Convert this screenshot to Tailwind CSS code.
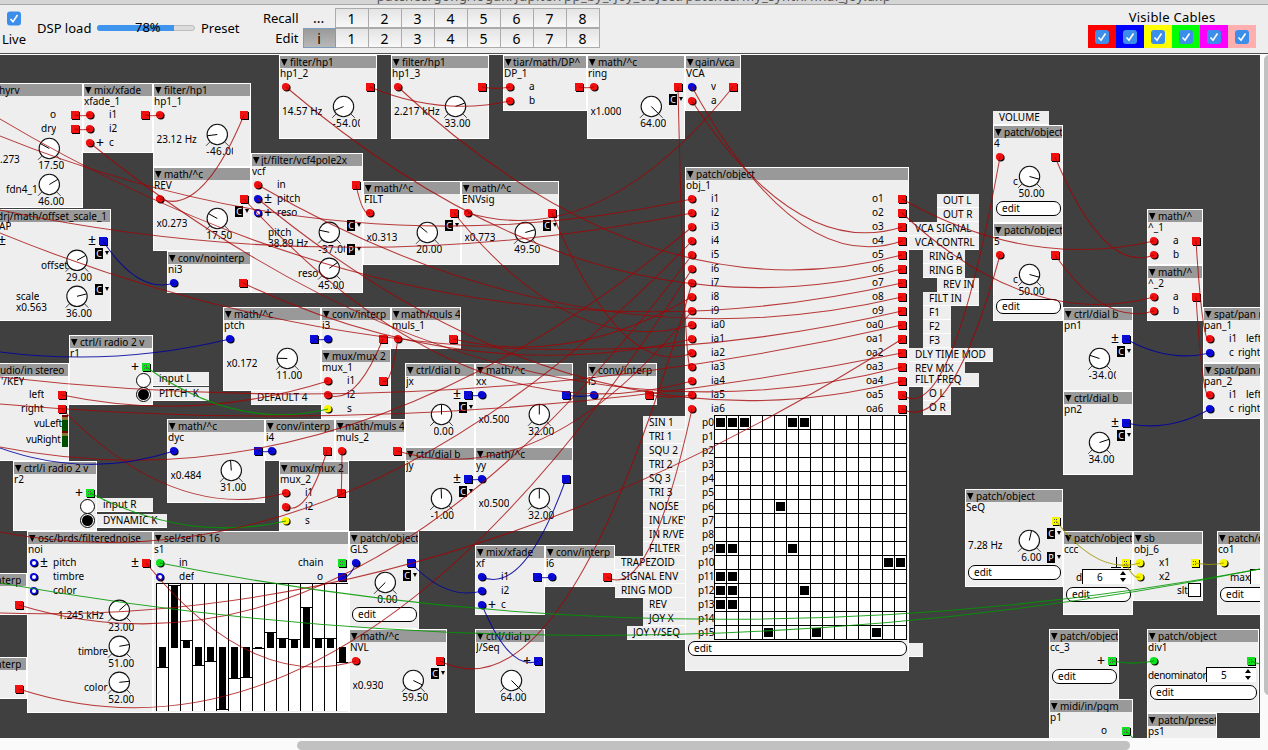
<!DOCTYPE html>
<html lang="en">
<head>
<meta charset="utf-8">
<title>Patch editor</title>
<script src="https://cdn.jsdelivr.net/npm/@tailwindcss/browser@4"></script>
</head>
<body class="w-[1268px] h-[750px] overflow-hidden bg-[#fafafa] text-black font-['Noto_Sans',sans-serif] flex flex-col">
<div class="h-[5px] shrink-0 bg-[#d5d5d5] border-b border-[#a8a8a8] overflow-hidden flex justify-center">
  <span class="text-[13px] leading-[14px] -mt-[11px] text-[#555] tracking-[0.5px] whitespace-pre">patches/gong/logan/jupiter/pp_by_/joy_object/patches/my_synth/final_joy.axp</span>
</div>
<header class="h-[50px] shrink-0 bg-[#eeeeee] border-b border-white flex text-[13px] leading-[16px]">
  <div class="w-full h-full border-b border-[#505050] flex">
    <div class="w-[28px] flex flex-col items-center pt-[6px] gap-[5px]">
      <svg width="14" height="15" viewBox="0 0 14 15"><rect y=".5" width="14" height="14" rx="3" fill="#3b8fea"/><path d="M3.5 8 6 10.8 10.5 4" fill="none" stroke="#fff" stroke-width="1.6"/></svg>
      <span>Live</span>
    </div>
    <div class="ml-[9px] mt-[15px] h-[16px] flex items-center">
      <span class="w-[54px] whitespace-nowrap">DSP load</span>
      <div class="relative ml-[6px] w-[98px] h-[6px] rounded-full border border-[#bdbdbd] bg-[#dcdcdc]">
        <div class="-ml-px -mt-px w-[77px] h-[6px] rounded-l-full bg-[#3f95ee]"></div>
        <span class="absolute left-[37px] -top-[7px]">78%</span>
      </div>
      <span class="ml-[6px]">Preset</span>
    </div>
    <div class="ml-[21px] mt-[3px] w-[38px] flex flex-col gap-[4px] pt-[2px] text-right">
      <span>Recall</span><span>Edit</span>
    </div>
    <div id="presets" class="ml-[4px] mt-[3px] grid grid-cols-[repeat(9,33px)] auto-rows-[20px] text-[14px] leading-[19px] text-center h-[40px]"></div>
    <div class="ml-auto mr-[12px] mt-[4px] flex flex-col items-center">
      <span class="tracking-[0.25px]">Visible Cables</span>
      <div id="swatches" class="flex h-[23px]"></div>
    </div>
  </div>
</header>
<main class="flex h-[683px]">
  <div id="canvas" class="relative w-[1260px] h-[683px] bg-[#404040] overflow-hidden text-[10px] leading-[14px]">
    <div id="world" class="absolute left-0 -top-[55px] w-[1260px] h-[740px]"></div>
  </div>
  <div class="w-[8px] pl-[4px]"><div class="h-[640px] w-[10px] rounded-full bg-[#c1c1c1]"></div></div>
</main>
<div class="h-[12px] pt-[3px] pl-[297px]"><div class="w-[833px] h-[9px] rounded-full bg-[#c1c1c1]"></div></div>
<script>
const presets = document.getElementById('presets');
let ph = '';
for (let r = 0; r < 2; r++) {
  ph += r ? '<div class="border border-[#7d9cc0] bg-gradient-to-b from-[#9a9a9a] to-[#b8b8b8]">i</div>' : '<div class="border-r border-[#ababab]">...</div>';
  for (let i = 1; i < 9; i++) ph += '<div class="border-r border-b border-t border-[#ababab] bg-gradient-to-b from-[#e4e4e4] to-[#f8f8f8]">' + i + '</div>';
}
presets.innerHTML = ph;
document.getElementById('swatches').innerHTML = ['#ff0000','#0000ff','#ffff00','#00ff00','#ff00ff','#ffafaf'].map(c =>
  `<div class="w-[28px] h-[23px] flex items-center justify-center" style="background:${c}"><svg width="14" height="14"><rect width="14" height="14" rx="3" fill="#3b8fea"/><path d="M3.5 7.5 6 10.3 10.5 3.5" fill="none" stroke="#fff" stroke-width="1.6"/></svg></div>`).join('');

let H = '', G = '';
const R = '#f01010', B = '#0a0ad8', Y = '#f6f600', L = '#10e020';
// object box with title bar and instance name
function node(x, y, w, h, title, name, tx = 11) {
  const tri = title ? '<path d="M0 0h6.500L3.250 7z"/>' : '';
  H += `<div class="absolute bg-[#eeeeee] border border-white overflow-hidden whitespace-pre" style="left:${x}px;top:${y}px;width:${w}px;height:${h}px"><div class="h-[12px] bg-[#999999] leading-[13px] flex items-start overflow-hidden"><svg class="shrink-0 mt-[3px] ml-px" width="7" height="7">${tri}</svg><span style="margin-left:${tx - 9}px">${title}</span></div><div class="leading-[13px] -mt-px">${name}</div></div>`;
}
function text(x, base, s, w, ls) {
  H += `<div class="absolute whitespace-pre overflow-hidden" style="left:${x}px;top:${base - 11}px;${w ? 'width:' + w + 'px;' : ''}${ls ? 'letter-spacing:' + ls + 'px' : ''}">${s}</div>`;
}
// signedness mark beside a port
function sign(x, base, s) {
  H += `<div class="absolute text-[14px] leading-[14px]" style="left:${x}px;top:${base - 11}px">${s}</div>`;
}
function label(x, y, w, s, pad = 6, h = 14) {
  H += `<div class="absolute bg-[#eeeeee] border-b border-white whitespace-pre overflow-hidden leading-[13px]" style="left:${x}px;top:${y}px;width:${w}px;height:${h}px;padding-left:${pad}px">${s}</div>`;
}
function edit(x, y, w) {
  H += `<div class="absolute h-[15px] rounded-[7px] border border-black bg-white leading-[13px] pl-[5px]" style="left:${x}px;top:${y}px;width:${w}px">edit</div>`;
}
function inlet(x, y, c, ring) {
  G += `<circle cx="${x + .8}" cy="${y + .8}" r="3.8" fill="#000"/><circle cx="${x - .3}" cy="${y - .3}" r="3.8" fill="${c}"/>`;
  if (ring) G += `<circle cx="${x}" cy="${y}" r="2" fill="#fff"/>`;
}
function outlet(x, y, c) {
  G += `<rect x="${x - 3}" y="${y - 3}" width="8" height="8" fill="#000"/><rect x="${x - 4}" y="${y - 4}" width="8" height="8" fill="${c}"/>`;
  if (c === L || c === Y) G += `<path d="M${x - 2} ${y - 1.5}h4M${x - 2} ${y + 1.5}h4" stroke="#555" stroke-dasharray="1 1" fill="none"/>`;
}
function dial(cx, cy, v, bi) {
  const a = (bi ? v / 64 * 135 : -135 + v / 64 * 270) * Math.PI / 180;
  G += `<path d="M${cx - 7.3} ${cy + 7.3}l-4 4M${cx + 7.3} ${cy + 7.3}l4 4" stroke="#444"/><circle cx="${cx}" cy="${cy}" r="10.2" fill="#fff" stroke="#111" stroke-width="1.1"/><path d="M${cx} ${cy}L${cx + 10 * Math.sin(a)} ${cy - 10 * Math.cos(a)}" stroke="#000"/>`;
  const s = v.toFixed(2);
  text(cx - (s.length < 5 ? 8 : 11), Math.ceil(cy + 19.8), s, s.length > 5 ? 27 : 0, s.length > 5 ? .4 : .1);
}
function tag(x, y, s = 'C') {
  H += `<div class="absolute w-[8px] h-[11px] bg-black text-white leading-[11px] text-center text-[9px]" style="left:${x}px;top:${y}px">${s}</div>`;
  G += `<path d="M${x + 10} ${y + 3}h4l-2 4z"/>`;
}
function spin(x, y, w, v) {
  H += `<div class="absolute h-[15px] bg-white border-t border-l border-black leading-[15px] flex justify-between pr-[6px]" style="left:${x}px;top:${y}px;width:${w}px"><span style="padding-left:${v === '' ? 0 : 14}px">${v}</span></div>`;
  if (v !== '') G += `<path d="M${x + w - 11} ${y + 6}h6l-3-4zM${x + w - 11} ${y + 9}h6l-3 4z"/>`;
}
let W = '';
const col = { r: 'rgba(165,0,0,.76)', b: 'rgba(0,0,160,.85)', g: 'rgba(0,150,0,.85)', y: 'rgba(160,150,0,.8)' };
// patch cable sagging between two ports
function cable(c, x0, y0, x1, y1) {
  const my = Math.max(y0, y1) + .1 * Math.abs(y1 - y0) + .1 * Math.abs(x1 - x0);
  W += `<path d="M${x0} ${y0}Q${(x0 + x1) / 2} ${my} ${x1} ${y1}" stroke="${col[c]}"/>`;
}
// cable leaving the visible area: a parabola through three of its points
function through(c, from, to, [ax, ay], [bx, by], [cx, cy]) {
  const f = x => ay * (x - bx) * (x - cx) / ((ax - bx) * (ax - cx)) + by * (x - ax) * (x - cx) / ((bx - ax) * (bx - cx)) + cy * (x - ax) * (x - bx) / ((cx - ax) * (cx - bx));
  const m = (from + to) / 2, q = 2 * f(m) - (f(from) + f(to)) / 2;
  W += `<path d="M${from} ${f(from)}Q${m} ${q} ${to} ${f(to)}" stroke="${col[c]}"/>`;
}
const mathc = (x, y, name, mul, v, c = R, t = true, ic = c) => {
  node(x, y, 98, 84, 'math/^c', name); inlet(x + 7, y + 32, ic); outlet(x + 91, y + 32, c);
  dial(x + 64.3, y + 51.5, v); text(x + 3.5, y + 60, mul); if (t) tag(x + 82, y + 39);
};

// left column
node(-40, 83, 123, 125, '', ''); text(-1, 94, 'hyrv'); text(50, 118, 'o'); text(41, 132, 'dry');
outlet(75, 115, R); outlet(75, 129, R); dial(49.3, 148.5, 17.5); text(0, 163, '.273'); dial(49.3, 184.5, 46); text(6, 193, 'fdn4_1');
node(83, 83, 70, 70, 'mix/xfade', 'xfade_1'); inlet(90, 115, R); inlet(90, 129, R); inlet(90, 143, R); outlet(145, 115, R);
text(109, 118, 'i1'); text(109, 132, 'i2'); sign(96, 147, '+'); text(109, 146, 'c');
node(153, 83, 98, 84, 'filter/hp1', 'hp1_1'); inlet(160, 115, R); outlet(244, 115, R); text(156.5, 143, '23.12 Hz'); dial(217.3, 134.5, -46, 1);
mathc(153, 167, 'REV', 'x0.273', 17.5);
node(-60, 209, 171, 112, '', ''); text(-3, 220, 'drj/math/offset_scale_1'); text(-1, 230, 'AP'); sign(-2, 244, '±'); sign(88, 244, '±'); outlet(103, 241, B);
dial(77, 260.3, 29, 1); tag(95, 248); text(41, 269, 'offset'); dial(77, 296.3, 36, 1); tag(95, 284); text(16, 300, 'scale'); text(16, 311, 'x0.563');
node(167, 251, 84, 42, 'conv/nointerp', 'ni3'); inlet(174, 283, B); outlet(243, 283, R);
node(69, 335, 84, 70, 'ctrl/i radio 2 v', 'r1'); outlet(146, 367, L); sign(131, 371, '+');
node(-60, 363, 129, 98, '', ''); text(0, 374, 'udio/in stereo', 0, -.1); text(1, 385, "'/KEY"); text(29, 398, 'left'); text(21, 412, 'right'); text(34, 427, 'vuLeft', 0, -.2); text(26, 443, 'vuRight', 0, -.2);
outlet(62, 395, R); outlet(62, 409, R);
G += '<rect x="62" y="415" width="6" height="32" fill="#005000"/><path d="M62 416h6M62 432h6" stroke="#700" stroke-width="2"/><path d="M62 418.5h6M62 434.5h6" stroke="#873" stroke-width="3"/>';
node(13, 461, 84, 70, 'ctrl/i radio 2 v', 'r2'); outlet(90, 493, L); sign(75, 497, '+');
for (const [x, y] of [[143.5, 380.5], [87.5, 506.5]]) G += `<circle cx="${x}" cy="${y}" r="7" fill="#fff" stroke="#000"/><circle cx="${x}" cy="${y + 14}" r="7" fill="#fff" stroke="#000"/><circle cx="${x}" cy="${y + 14}" r="5.5"/>`;
label(153, 372, 56, 'input L'); label(153, 387, 56, 'PITCH&nbsp; K'); label(97, 498, 56, 'input R'); label(97, 514, 70, 'DYNAMIC K');

// upper row
node(279, 55, 98, 84, 'filter/hp1', 'hp1_2'); inlet(286, 87, R); outlet(370, 87, R); text(282, 115, '14.57 Hz'); dial(343.5, 106.5, -54, 1);
node(391, 55, 98, 84, 'filter/hp1', 'hp1_3'); inlet(398, 87, R); outlet(482, 87, R); text(394, 115, '2.217 kHz'); dial(455.5, 106.5, 33, 1);
node(503, 55, 84, 56, 'tiar/math/DP^', 'DP_1', 10); inlet(510, 87, R); inlet(510, 101, R); outlet(579, 87, R); text(529, 90, 'a'); text(529, 104, 'b');
mathc(587, 55, 'ring', 'x1.000', 64);
node(685, 55, 56, 56, 'gain/vca', 'VCA', 10); inlet(692, 87, B); inlet(692, 101, R); outlet(733, 87, R); text(711, 90, 'v'); text(711, 104, 'a');
node(251, 153, 112, 140, 'jt/filter/vcf4pole2x', 'vcf', 10); inlet(258, 185, R); inlet(258, 199, B); inlet(258, 213, B, 1); outlet(356, 185, R);
text(277, 188, 'in'); sign(264, 202, '±'); text(277, 202, 'pitch'); sign(264, 217, '+'); text(277, 216, 'reso'); text(268, 236, 'pitch'); text(268, 247, '38.89 Hz');
dial(329.3, 232.3, -37, 1); tag(347, 220); tag(347, 244, 'P'); text(298, 277, 'reso'); dial(329.3, 268.3, 45);
mathc(363, 181, 'FILT', 'x0.313', 20); mathc(461, 181, 'ENVsig', 'x0.773', 49.5);

// middle
mathc(223, 307, 'ptch', 'x0.172', 11, B, false);
node(321, 307, 70, 42, 'conv/interp', 'i3'); inlet(328, 339, B); outlet(383, 339, R);
node(391, 307, 70, 42, 'math/muls 4', 'muls_1', 10); inlet(398, 339, R); outlet(453, 339, R);
node(321, 349, 70, 70, 'mux/mux 2', 'mux_1'); inlet(328, 381, R); inlet(328, 395, R); inlet(328, 409, Y); outlet(383, 381, R); text(347, 384, 'i1'); text(347, 398, 'i2'); text(347, 412, 's');
label(251, 391, 70, 'DEFAULT 4');
mathc(167, 419, 'dyc', 'x0.484', 31, B, false);
node(265, 419, 70, 42, 'conv/interp', 'i4'); inlet(272, 451, B); outlet(327, 451, R);
node(335, 419, 70, 42, 'math/muls 4', 'muls_2', 10); inlet(342, 451, R); outlet(397, 451, R);
node(279, 461, 70, 70, 'mux/mux 2', 'mux_2'); inlet(286, 493, R); inlet(286, 507, R); inlet(286, 521, Y); outlet(341, 493, R); text(305, 496, 'i1'); text(305, 510, 'i2'); text(305, 524, 's');
for (const [y, a, b, v] of [[363, 'jx', 'xx', 0], [447, 'jy', 'yy', -1]]) {
  node(405, y, 70, 84, 'ctrl/dial b', a); sign(453, y + 35, '±'); outlet(468, y + 32, B); tag(459, y + 39); dial(441.5, y + 51.5, v, 1);
  mathc(475, y, b, 'x0.500', 32, B, false);
}
node(587, 363, 70, 42, 'conv/interp', 'i5'); inlet(594, 395, B); outlet(649, 395, R);

// lower
node(-50, 573, 77, 42, '', ''); text(-7, 584, 'interp'); outlet(19, 605, R);
node(-50, 657, 77, 42, '', ''); text(-7, 668, 'interp'); outlet(19, 689, R);
node(27, 531, 126, 182, 'osc/brds/filterednoise', 'noi'); inlet(34, 563, B, 1); inlet(34, 577, B, 1); inlet(34, 591, B, 1); outlet(146, 563, R);
sign(40, 566, '±'); sign(131, 566, '±'); text(53, 566, 'pitch'); text(53, 580, 'timbre'); text(53, 594, 'color'); text(58, 619, '1.245 kHz'); text(78, 655, 'timbre', 0, -.2); text(84, 691, 'color');
dial(119.3, 610.3, 23, 1); dial(119.3, 646.3, 51); dial(119.3, 682.3, 52);
node(153, 531, 196, 182, 'sel/sel fb 16', 's1'); inlet(160, 563, L); inlet(160, 577, B, 1); outlet(342, 563, L); outlet(342, 577, B);
text(179, 566, 'in'); text(179, 580, 'def'); text(298, 566, 'chain'); text(317, 580, 'o');
G += '<rect x="156" y="583" width="192" height="128" fill="#fff"/><path d="M156 583.5h192" stroke="#000"/>';
[667, 585, 640, 665, 661, 709, 678, 677, 648, 632, 638, 639, 607, 638, 638, 662].forEach((e, i) => {
  const x = 156 + 12 * i, t = Math.min(e, 647), h = Math.abs(e - 647) + (e < 647 ? 1 : 0);
  G += `<path d="M${x + .5} 583v128M${x} ${e + .5}h12" stroke="#000"/><rect x="${x + 3}" y="${t}" width="7" height="${h}"/>`;
});
node(349, 531, 70, 98, 'patch/object', 'GLS'); inlet(356, 563, B); outlet(411, 563, B); tag(403, 570); dial(385.3, 582.5, 0); edit(352, 607, 65);
mathc(349, 629, 'NVL', 'x0.930', 59.5);
node(475, 545, 70, 70, 'mix/xfade', 'xf'); inlet(482, 577, B); inlet(482, 591, B); inlet(482, 605, B); outlet(537, 577, B); text(501, 580, 'i1'); text(501, 594, 'i2'); sign(488, 609, '+'); text(501, 608, 'c');
node(545, 545, 70, 42, 'conv/interp', 'i6'); inlet(552, 577, B); outlet(607, 577, R);
node(475, 629, 70, 84, 'ctrl/dial p', 'J/Seq'); outlet(538, 661, B); sign(523, 665, '+'); dial(511.5, 680.5, 64);

// modulation matrix
node(685, 167, 224, 504, 'patch/object', 'obj_1');
['i1','i2','i3','i4','i5','i6','i7','i8','i9','ia0','ia1','ia2','ia3','ia4','ia5','ia6'].forEach((s, i) => {
  const y = 199 + 14 * i, o = s.replace('i', 'o');
  inlet(692, y, R); outlet(902, y, R); text(711, y + 3, s); text(o.length > 2 ? 866 : 872, y + 3, o);
});
G += '<rect x="714" y="416" width="193" height="224" fill="#fff"/>';
for (let i = 0; i <= 16; i++) { G += `<path d="M${714.5 + 12 * i} 416v223M714 ${415.5 + 14 * i}h193" stroke="#000"/>`; if (i < 16) text(i < 10 ? 702 : 698, 426 + 14 * i, 'p' + i, 0, i < 10 ? 0 : -.5); }
[[0,0],[0,1],[0,2],[0,6],[0,7],[6,5],[9,0],[9,1],[9,6],[10,14],[10,15],[11,0],[11,1],[12,0],[12,1],[12,7],[13,0],[13,1],[15,4],[15,8],[15,13]].forEach(([r, c]) => { G += `<rect x="${716 + 12 * c}" y="${418 + 14 * r}" width="9" height="9"/>`; });
edit(688, 641, 219); label(909, 643, 14, '');
['SIN 1','TRI 1','SQU 2','TRI 2','SQ 3','TRI 3','NOISE','IN L/KEY','IN R/VE','FILTER','TRAPEZOID','SIGNAL ENV','RING MOD','REV','JOY X','JOY Y/SEQ'].forEach((s, i) => {
  const x = i >= 10 && i <= 12 ? 615 : i === 15 ? 627 : 643; label(x, 416 + 14 * i, 685 - x, s);
});
[[937,194,42,'OUT L'],[937,208,42,'OUT R'],[909,222,70,'VCA SIGNAL'],[909,236,70,'VCA CONTRL'],[923,250,42,'RING A'],[923,264,42,'RING B'],[937,278,42,'REV IN'],[923,292,56,'FILT IN'],[923,306,28,'F1'],[923,320,28,'F2'],[923,334,28,'F3'],[909,348,84,'DLY TIME MOD'],[909,362,56,'REV MIX'],[909,373,70,'FILT FREQ'],[923,387,28,'O L'],[923,401,28,'O R']].forEach(a => label(...a));

// right side
label(993, 111, 56, 'VOLUME');
for (const [y, n] of [[125, '4'], [223, '5']]) { node(993, y, 70, 98, 'patch/object', n); inlet(1000, y + 32, R); outlet(1055, y + 32, R); text(1013, y + 60, 'c'); dial(1029.5, y + 51.5, 50, 1); edit(996, y + 76, 65); }
for (const [y, n] of [[209, '^_1'], [265, '^_2']]) { node(1147, y, 56, 56, 'math/^', n); inlet(1154, y + 32, R); inlet(1154, y + 46, R); outlet(1196, y + 32, R); text(1173, y + 35, 'a'); text(1173, y + 49, 'b'); }
for (const [y, n, v] of [[307, 'pn1', -34], [391, 'pn2', 34]]) { node(1063, y, 70, 84, 'ctrl/dial b', n); sign(1111, y + 35, '±'); outlet(1126, y + 32, B); tag(1117, y + 39); dial(1099.5, y + 51.5, v, 1); }
for (const [y, n] of [[307, 'pan_1'], [363, 'pan_2']]) { node(1203, y, 80, 56, 'spat/pan m', n); inlet(1210, y + 32, R); inlet(1210, y + 46, B); text(1229, y + 35, 'i1'); text(1229, y + 49, 'c'); text(1246, y + 35, 'left'); text(1238, y + 49, 'right', 0, -.1); }
node(965, 489, 98, 98, 'patch/object', 'SeQ'); outlet(1056, 521, Y); tag(1047, 528); tag(1047, 552, 'P'); text(968, 549, '7.28 Hz'); dial(1029.3, 540.5, 6, 1); edit(968, 565, 93);
node(1063, 531, 70, 84, 'patch/object', 'ccc'); outlet(1126, 563, Y); text(1076, 581, 'd'); spin(1082, 569, 49, '6'); edit(1066, 587, 65);
G += '<path d="M1116.500 557v10M1111 567.500h10" stroke="#000"/>';
node(1133, 531, 70, 70, 'sb', 'obj_6'); inlet(1140, 563, Y); inlet(1140, 577, Y); outlet(1195, 563, Y); text(1159, 566, 'x1'); text(1159, 580, 'x2'); text(1177, 594, 'slt');
G += '<rect x="1188.500" y="583.500" width="12" height="13" fill="#fff" stroke="#000"/>';
node(1217, 531, 90, 84, 'patch/object', 'co1'); inlet(1224, 563, Y); text(1230, 581, 'max'); spin(1250, 569, 49, ''); edit(1220, 587, 80);
node(1049, 629, 70, 72, 'patch/object', 'cc_3'); outlet(1112, 661, L); sign(1097, 665, '+'); edit(1052, 669, 65);
node(1147, 629, 112, 84, 'patch/object', 'div1'); inlet(1154, 661, L); outlet(1251, 661, L); text(1148, 679, 'denominator', 0, -.3); spin(1206, 667, 50, '5'); edit(1150, 685, 107);
node(1049, 699, 84, 60, 'midi/in/pgm', 'p1'); outlet(1126, 731, L); text(1101, 734, 'o');
node(1147, 713, 70, 50, 'patch/preset', 'ps1');

// cables
[['r',75,115,90,115],['r',75,129,90,129],['r',145,115,160,115],['r',244,115,160,199],['r',370,87,510,101],['r',482,87,510,87],['r',579,87,594,87],
['r',902,255,398,87],['r',902,269,286,87],['r',902,241,692,87],['r',902,227,692,101],['r',902,297,258,185],['r',902,381,258,199],['r',902,367,90,143],
['r',244,199,692,381],['r',243,283,692,339],['r',356,185,370,213],['r',454,213,692,325],['r',552,213,692,353],['r',733,87,468,213],['r',678,87,692,367],
['r',453,339,692,297],['r',397,451,692,311],['r',383,381,398,339],['r',383,339,328,395],['r',327,451,286,507],['r',341,493,342,451],['r',62,395,328,381],['r',62,409,286,493],
['r',649,395,692,395],['r',607,577,692,409],['r',440,661,692,283],['r',146,563,356,661],['r',19,605,692,255],['r',19,689,692,269],
['r',902,199,1154,241],['r',902,213,1154,297],['r',902,395,1000,157],['r',902,409,1000,255],['r',1055,157,1154,255],['r',1055,255,1154,311],['r',1196,241,1210,339],['r',1196,297,1210,395],
['b',103,241,174,283],['b',314,339,328,339],['b',258,451,272,451],['b',468,395,482,395],['b',468,479,482,479],['b',566,395,594,395],['b',566,479,482,577],['b',411,563,482,591],['b',538,661,482,605],['b',537,577,552,577],['b',342,577,356,563],['b',1126,339,1210,353],['b',1126,423,1210,409],
['g',146,367,328,409],['g',90,493,286,521],['g',1112,661,1154,661],['g',1251,661,1290,665],['g',1126,731,1160,745],
['y',1056,521,1140,563],['y',1126,563,1140,577],['y',1195,563,1224,563]].forEach(a => cable(...a));
through('r', -20, 692, [0,136],[430,226],[692,199]);
through('r', -20, 692, [0,210],[320,247],[692,213]);
through('r', -20, 902, [0,119],[320,262],[902,283]);
through('r', -20, 902, [0,233],[320,327],[902,311]);
through('r', -20, 902, [0,377],[300,394],[902,325]);
through('r', -20, 902, [0,404],[300,416],[902,353]);
through('r', -20, 902, [0,613],[340,581],[902,339]);
through('r', -20, 692, [0,447],[250,450],[692,227]);
through('r', -20, 692, [0,532],[150,541],[692,241]);
through('b', -20, 230, [0,352],[90,357],[230,339]);
through('b', -20, 174, [0,448],[105,464],[174,451]);
through('g', 160, 1268, [160,563],[690,619],[1260,569]);
through('g', -20, 1268, [0,583],[690,634],[1260,569]);
document.getElementById('world').innerHTML = H + `<svg class="absolute inset-0" width="1260" height="740">${G}<g fill="none" stroke-width="1.05">${W}</g></svg>`;
</script>
</body>
</html>
